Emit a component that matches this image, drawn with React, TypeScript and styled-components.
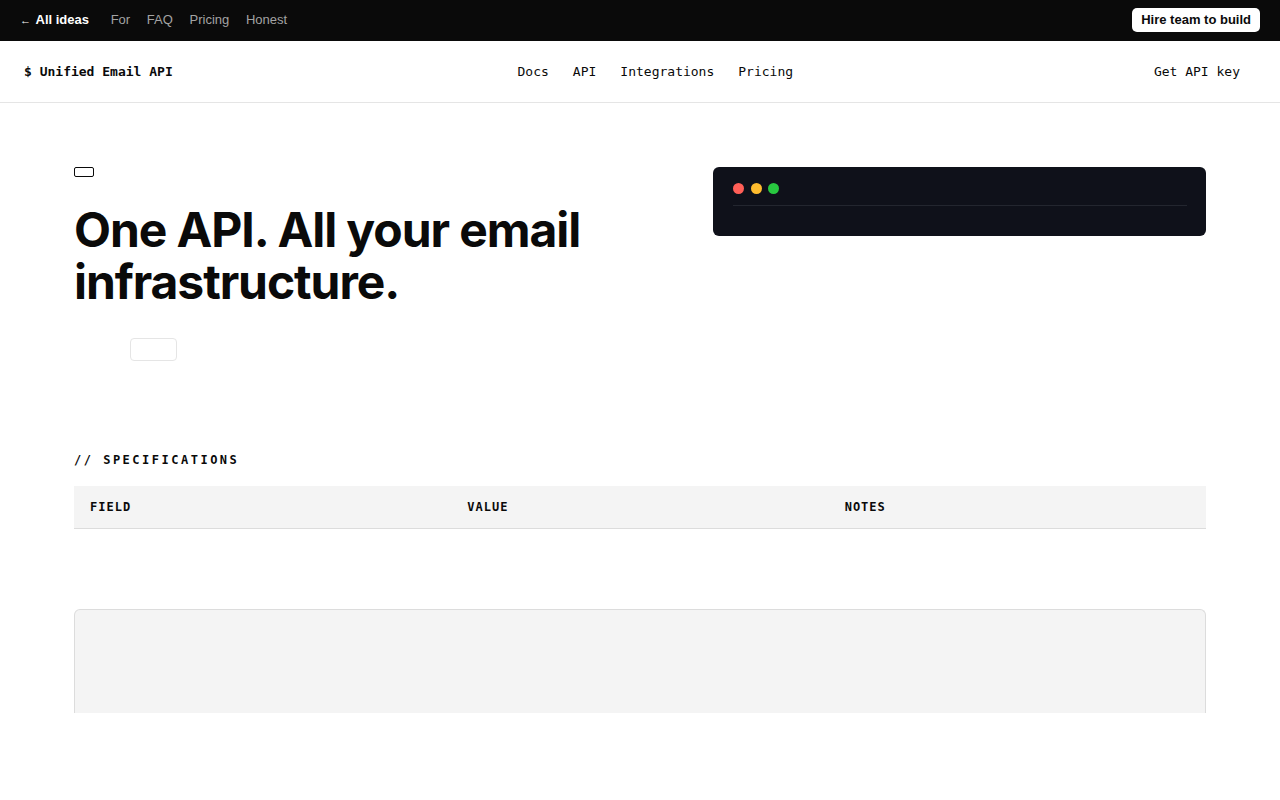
import React from "react";
import styled, { createGlobalStyle } from "styled-components";

const Global = createGlobalStyle`
  * { box-sizing: border-box; }
  html, body { margin: 0; padding: 0; background: #ffffff; }
  body { font-family: Inter, "Liberation Sans", sans-serif; color: #0a0a0a; }
`;

const MONO = `"DejaVu Sans Mono", "Liberation Mono", monospace`;

const TopBar = styled.div`
  height: 41px;
  background: #0a0a0a;
  display: flex;
  align-items: center;
  justify-content: space-between;
  padding: 0 20px 2px 20px;
  font-family: "Liberation Sans", Arial, sans-serif;
  font-size: 13px;
`;

const TopLinks = styled.div`
  display: flex;
  align-items: center;
  gap: 16.7px;
`;

const BackLink = styled.a`
  color: #ffffff;
  font-weight: 700;
  text-decoration: none;
  margin-right: 5px;
  display: flex;
  align-items: center;
  gap: 4.5px;
`;

const Arrow = styled.span`
  font-weight: 400;
  font-size: 11px;
`;

const TopLink = styled.a`
  color: #a3a3a3;
  text-decoration: none;
`;

const HireButton = styled.button`
  background: #ffffff;
  color: #0a0a0a;
  border: none;
  border-radius: 5px;
  height: 24px;
  padding: 0 9px;
  font-family: "Liberation Sans", Arial, sans-serif;
  font-weight: 700;
  font-size: 13px;
  cursor: pointer;
`;

const NavBar = styled.nav`
  height: 62px;
  border-bottom: 1px solid #e5e5e5;
  display: flex;
  justify-content: space-between;
  align-items: center;
  padding: 0 24px;
  font-family: ${MONO};
  font-size: 13px;
`;

const Brand = styled.div`
  font-weight: 700;
  color: #0a0a0a;
`;

const NavLinks = styled.div`
  display: flex;
  gap: 24px;
`;

const NavLink = styled.a`
  color: #0a0a0a;
  text-decoration: none;
`;

const KeyButton = styled.a`
  color: #0a0a0a;
  text-decoration: none;
  padding: 6px 16px;
`;

const Main = styled.main`
  width: 1132px;
  margin: 0 auto;
`;

const Hero = styled.section`
  display: grid;
  grid-template-columns: 1fr 493px;
  gap: 48px;
  padding: 64px 0 0;
  align-items: start;
`;

const HeroLeft = styled.div`
  display: flex;
  flex-direction: column;
  align-items: flex-start;
`;

const Badge = styled.span`
  display: block;
  width: 20px;
  height: 10px;
  border: 1px solid #0a0a0a;
  border-radius: 2px;
`;

const Title = styled.h1`
  margin: 27px 0 0;
  font-family: Inter, "Liberation Sans", sans-serif;
  font-weight: 700;
  font-size: 48px;
  line-height: 52px;
  letter-spacing: -0.0225em;
  color: #0a0a0a;
`;

const Actions = styled.div`
  display: flex;
  gap: 12px;
  margin-top: 30px;
`;

const Spacer = styled.span`
  width: 44px;
  height: 23px;
`;

const GhostButton = styled.button`
  width: 47px;
  height: 23px;
  border: 1px solid #e5e5e5;
  border-radius: 4px;
  background: #ffffff;
  padding: 0;
`;

const Terminal = styled.div`
  background: #0f111a;
  border-radius: 6px;
  height: 69px;
  padding: 16px 19px 0 20px;
`;

const Dots = styled.div`
  display: flex;
  gap: 6.5px;
  padding-bottom: 11px;
  border-bottom: 1px solid #23262f;
`;

const Dot = styled.span<{ $c: string }>`
  width: 11px;
  height: 11px;
  border-radius: 50%;
  background: ${(p) => p.$c};
`;

const Specs = styled.section`
  margin-top: 91px;
`;

const SpecLabel = styled.h2`
  margin: 0 0 18px;
  font-family: ${MONO};
  font-size: 12px;
  font-weight: 700;
  letter-spacing: 2.5px;
  line-height: 16px;
  color: #0a0a0a;
`;

const Table = styled.div`
  display: grid;
  grid-template-columns: repeat(3, 1fr);
  background: #f4f4f4;
  border-bottom: 1px solid #dcdcdc;
  height: 43px;
  align-items: center;
`;

const HeadCell = styled.div`
  padding: 0 16px;
  font-family: ${MONO};
  font-size: 12px;
  font-weight: 700;
  letter-spacing: 1px;
  color: #0a0a0a;
`;

const Panel = styled.div`
  margin-top: 80px;
  height: 104px;
  background: #f4f4f4;
  border: 1px solid #dcdcdc;
  border-bottom: none;
  border-radius: 6px 6px 0 0;
`;

export default function App() {
  return (
    <>
      <Global />
      <TopBar>
        <TopLinks>
          <BackLink href="#">
            <Arrow>←</Arrow> All ideas
          </BackLink>
          <TopLink href="#">For</TopLink>
          <TopLink href="#">FAQ</TopLink>
          <TopLink href="#">Pricing</TopLink>
          <TopLink href="#">Honest</TopLink>
        </TopLinks>
        <HireButton>Hire team to build</HireButton>
      </TopBar>
      <NavBar>
        <Brand>$ Unified Email API</Brand>
        <NavLinks>
          <NavLink href="#">Docs</NavLink>
          <NavLink href="#">API</NavLink>
          <NavLink href="#">Integrations</NavLink>
          <NavLink href="#">Pricing</NavLink>
        </NavLinks>
        <KeyButton href="#">Get API key</KeyButton>
      </NavBar>
      <Main>
        <Hero>
          <HeroLeft>
            <Badge />
            <Title>
              One API. All your email
              <br />
              infrastructure.
            </Title>
            <Actions>
              <Spacer />
              <GhostButton aria-label="" />
            </Actions>
          </HeroLeft>
          <Terminal>
            <Dots>
              <Dot $c="#ff5f57" />
              <Dot $c="#febc2e" />
              <Dot $c="#28c840" />
            </Dots>
          </Terminal>
        </Hero>
        <Specs>
          <SpecLabel>// SPECIFICATIONS</SpecLabel>
          <Table>
            <HeadCell>FIELD</HeadCell>
            <HeadCell>VALUE</HeadCell>
            <HeadCell>NOTES</HeadCell>
          </Table>
        </Specs>
        <Panel />
      </Main>
    </>
  );
}
